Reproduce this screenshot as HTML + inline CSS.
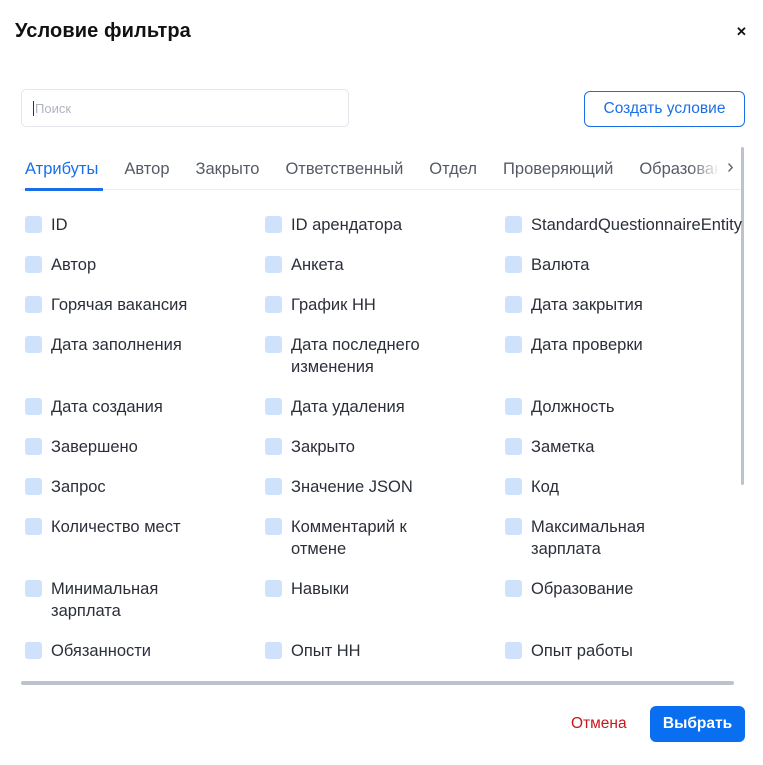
<!DOCTYPE html>
<html><head><meta charset="utf-8"><style>
*{box-sizing:border-box;margin:0;padding:0}
body{width:763px;height:765px;background:#fff;font-family:"Liberation Sans",sans-serif;position:relative;overflow:hidden;color:#2b2f3a}
.t{position:absolute;left:15px;top:20px;font-size:20px;color:#111;font-weight:bold;letter-spacing:0.1px}
.x{position:absolute;left:736px;top:24px;font-size:13px;color:#111;font-weight:bold}
.search{position:absolute;left:21px;top:89px;width:328px;height:38px;border:1px solid #e3e6ea;border-radius:5px}
.search span{position:absolute;left:11px;top:11px;font-size:13px;color:#b0b5bd;border-left:1px solid #333;padding-left:1px}
.btn1{position:absolute;left:584px;top:91px;width:161px;height:36px;border:1px solid #1a6fe8;border-radius:6px;color:#1a6fe8;font-size:15.5px;text-align:center;line-height:34px}
.tabs{position:absolute;left:25px;top:160px;font-size:16.5px;color:#555b66;white-space:nowrap;width:693px;overflow:hidden}
.tabs span{margin-right:26px}
.tabs .a{color:#1a6fe8}
.fade{position:absolute;left:690px;top:155px;width:30px;height:30px;background:linear-gradient(90deg,rgba(255,255,255,0),#fff)}
.tl{position:absolute;left:21px;top:189px;width:721px;height:1px;background:#e3eefc}
.ul{position:absolute;left:25px;top:188px;width:78px;height:3px;background:#1a6fe8}
.chev{position:absolute;left:727px;top:156px;font-size:20px;color:#666}
.vs{position:absolute;left:741px;top:147px;width:3px;height:338px;background:#bcc3cc;border-radius:2px}
.hs{position:absolute;left:21px;top:681px;width:713px;height:4px;background:#bcc3cc;border-radius:2px}
.i{position:absolute;font-size:16.5px;line-height:22px;width:200px;padding-left:26px}
.i:before{content:"";position:absolute;left:0;top:2px;width:17px;height:17px;background:#cfe2fb;border-radius:3px}
.c{position:absolute;left:571px;top:715px;color:#c8161d;font-size:15.5px}
.b{position:absolute;left:650px;top:706px;width:95px;height:36px;background:#0a6ef0;color:#fff;border-radius:6px;font-size:15.5px;font-weight:bold;text-align:center;line-height:36px}
</style></head><body>
<div class="t">Условие фильтра</div><div class="x">✕</div>
<div class="search"><span>Поиск</span></div>
<div class="btn1">Создать условие</div>
<div class="tabs"><span class="a">Атрибуты</span><span>Автор</span><span>Закрыто</span><span>Ответственный</span><span>Отдел</span><span>Проверяющий</span><span>Образование</span></div>
<div class="fade"></div>
<div class="chev">›</div>
<div class="tl"></div><div class="ul"></div>
<div class="vs"></div>
<div style="position:absolute;left:0;top:201px;width:745px;height:480px;overflow:hidden">
<div class="i" style="left:25px;top:13px">ID</div>
<div class="i" style="left:265px;top:13px">ID арендатора</div>
<div class="i" style="left:505px;top:13px;width:260px">StandardQuestionnaireEntity</div>
<div class="i" style="left:25px;top:53px">Автор</div>
<div class="i" style="left:265px;top:53px">Анкета</div>
<div class="i" style="left:505px;top:53px">Валюта</div>
<div class="i" style="left:25px;top:93px">Горячая вакансия</div>
<div class="i" style="left:265px;top:93px">График HH</div>
<div class="i" style="left:505px;top:93px">Дата закрытия</div>
<div class="i" style="left:25px;top:133px">Дата заполнения</div>
<div class="i" style="left:265px;top:133px">Дата последнего изменения</div>
<div class="i" style="left:505px;top:133px">Дата проверки</div>
<div class="i" style="left:25px;top:195px">Дата создания</div>
<div class="i" style="left:265px;top:195px">Дата удаления</div>
<div class="i" style="left:505px;top:195px">Должность</div>
<div class="i" style="left:25px;top:235px">Завершено</div>
<div class="i" style="left:265px;top:235px">Закрыто</div>
<div class="i" style="left:505px;top:235px">Заметка</div>
<div class="i" style="left:25px;top:275px">Запрос</div>
<div class="i" style="left:265px;top:275px">Значение JSON</div>
<div class="i" style="left:505px;top:275px">Код</div>
<div class="i" style="left:25px;top:315px">Количество мест</div>
<div class="i" style="left:265px;top:315px;width:190px">Комментарий к отмене</div>
<div class="i" style="left:505px;top:315px;width:190px">Максимальная зарплата</div>
<div class="i" style="left:25px;top:377px;width:190px">Минимальная зарплата</div>
<div class="i" style="left:265px;top:377px">Навыки</div>
<div class="i" style="left:505px;top:377px">Образование</div>
<div class="i" style="left:25px;top:439px">Обязанности</div>
<div class="i" style="left:265px;top:439px">Опыт HH</div>
<div class="i" style="left:505px;top:439px">Опыт работы</div>
<div class="i" style="left:25px;top:479px">.</div>
<div class="i" style="left:265px;top:479px">.</div>
<div class="i" style="left:505px;top:479px">.</div>
</div>
<div class="hs"></div>
<div class="c">Отмена</div>
<div class="b">Выбрать</div>
</body></html>
